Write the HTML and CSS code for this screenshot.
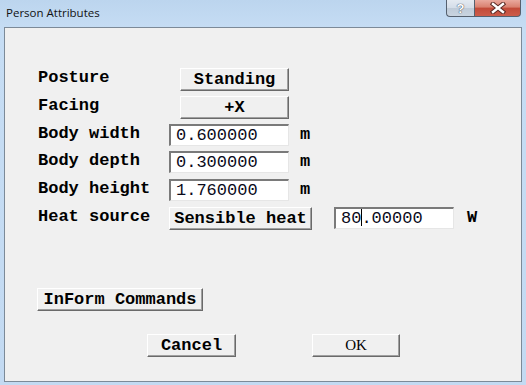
FILE: index.html
```html
<!DOCTYPE html>
<html lang="en">
<head>
  <meta charset="UTF-8" />
  <title>Person Attributes</title>
  <link rel="stylesheet" href="styles.css">
</head>
<body>

  <div class="window">
    <div class="titlebar">
      <span class="title">Person Attributes</span>
      <div class="caption">
        <span class="cap help">?</span>
        <span class="cap close">
          <svg width="16" height="12" viewBox="0 0 16 12">
            <path d="M3 2 L13 10 M13 2 L3 10" stroke="#5a2a24" stroke-width="4.4" stroke-linecap="square"/>
            <path d="M3 2 L13 10 M13 2 L3 10" stroke="#fff" stroke-width="2.4" stroke-linecap="square"/>
          </svg>
        </span>
      </div>
    </div>

    <div class="client">
      <div class="form">
        <div class="row">
          <span class="label">Posture</span>
          <button class="btn choice">Standing</button>
        </div>
        <div class="row">
          <span class="label">Facing</span>
          <button class="btn choice">+X</button>
        </div>
        <div class="row">
          <span class="label">Body width</span>
          <div class="field">0.600000</div>
          <span class="unit">m</span>
        </div>
        <div class="row">
          <span class="label">Body depth</span>
          <div class="field">0.300000</div>
          <span class="unit">m</span>
        </div>
        <div class="row">
          <span class="label">Body height</span>
          <div class="field">1.760000</div>
          <span class="unit">m</span>
        </div>
        <div class="row">
          <span class="label">Heat source</span>
          <button class="btn heat">Sensible heat</button>
          <div class="field watts">80<span class="caret"></span>.00000</div>
          <span class="unit w">W</span>
        </div>
      </div>

      <button class="btn inform">InForm Commands</button>

      <div class="footer">
        <button class="btn cancel">Cancel</button>
        <button class="btn ok">OK</button>
      </div>
    </div>
  </div>

</body>
</html>
```

FILE: styles.css
```css
body {
  margin: 0;
  background-color: #c4dbf2;
}

.window {
  width: 526px;
  height: 385px;
  box-sizing: border-box;
  padding: 0 4px 3px 4px;
  background: linear-gradient(180deg, #bcd5ee 0px, #c6ddf4 30px, #c3daf2 100%);
  display: flex;
  flex-direction: column;
}

.titlebar {
  height: 27px;
  display: flex;
  align-items: flex-start;
}

.title {
  font-family: "Open Sans", "Liberation Sans", sans-serif;
  font-size: 11.5px;
  color: #111;
  margin: 5px 0 0 2px;
}

.caption {
  margin-left: auto;
  margin-right: 1px;
  display: flex;
}

.cap {
  height: 17px;
  box-sizing: border-box;
  border: 1px solid #55606e;
  border-top: none;
  display: flex;
  align-items: center;
  justify-content: center;
}

.help {
  width: 28px;
  border-right: none;
  border-radius: 0 0 0 4px;
  background: linear-gradient(180deg, #e4eaf1 0%, #d4dde8 50%, #bfcbd8 51%, #c9d4e0 100%);
  font-family: "Liberation Sans", sans-serif;
  font-weight: bold;
  font-size: 13px;
  color: #fff;
  text-shadow: 0 0 1px #3a4656, 0 0 1px #3a4656;
}

.close {
  width: 47px;
  border-radius: 0 0 4px 0;
  background: linear-gradient(180deg, #e9a99e 0%, #d9806f 45%, #c24a38 50%, #cc5c4a 100%);
}

.client {
  flex: 1;
  background-color: #f0f0f0;
  border: 1px solid #7c8a98;
  display: flex;
  flex-direction: column;
  align-items: flex-start;
}

.form {
  padding: 40px 0 0 33px;
  display: grid;
  grid-auto-rows: 23px;
  row-gap: 4.8px;
}

.row {
  display: flex;
  align-items: flex-start;
}

.label,
.unit {
  font-family: "Liberation Mono", "Courier New", monospace;
  font-weight: bold;
  font-size: 17px;
  line-height: 17px;
  color: #000;
}

.label {
  width: 131px;
  padding-top: 1px;
}

.unit {
  margin-left: 11px;
  padding-top: 2px;
}

.unit.w {
  margin-left: 13px;
}

.btn {
  font-family: "Liberation Mono", "Courier New", monospace;
  font-weight: bold;
  font-size: 17px;
  color: #000;
  background-color: #f0f0f0;
  height: 23px;
  padding: 0;
  box-sizing: border-box;
  border: 1px solid;
  border-color: #fff #6a6a6a #6a6a6a #fff;
  box-shadow: inset -1px -1px #a0a0a0;
  display: flex;
  align-items: center;
  justify-content: center;
}

.choice {
  margin-left: 11px;
  width: 109px;
}

.heat {
  width: 143px;
}

.field {
  width: 120px;
  height: 22px;
  box-sizing: border-box;
  background-color: #fff;
  border-style: solid;
  border-width: 2px 1px 1px 2px;
  border-color: #7a7a7a #e6e6e6 #e6e6e6 #7a7a7a;
  padding-left: 5px;
  font-family: "Liberation Mono", "Courier New", monospace;
  font-size: 17px;
  line-height: 19px;
  color: #0a0a1a;
}

.watts {
  margin-left: 22px;
}

.caret {
  display: inline-block;
  width: 1px;
  height: 17px;
  margin-right: -1px;
  background-color: #000;
  vertical-align: -3px;
}

.inform {
  margin: 58px 0 0 32px;
  width: 166px;
}

.footer {
  margin: 23px 0 0 142px;
  display: flex;
  gap: 76px;
}

.cancel {
  width: 89px;
}

.ok {
  width: 88px;
  font-family: "Liberation Serif", "Times New Roman", serif;
  font-weight: normal;
  font-size: 15px;
}
```
